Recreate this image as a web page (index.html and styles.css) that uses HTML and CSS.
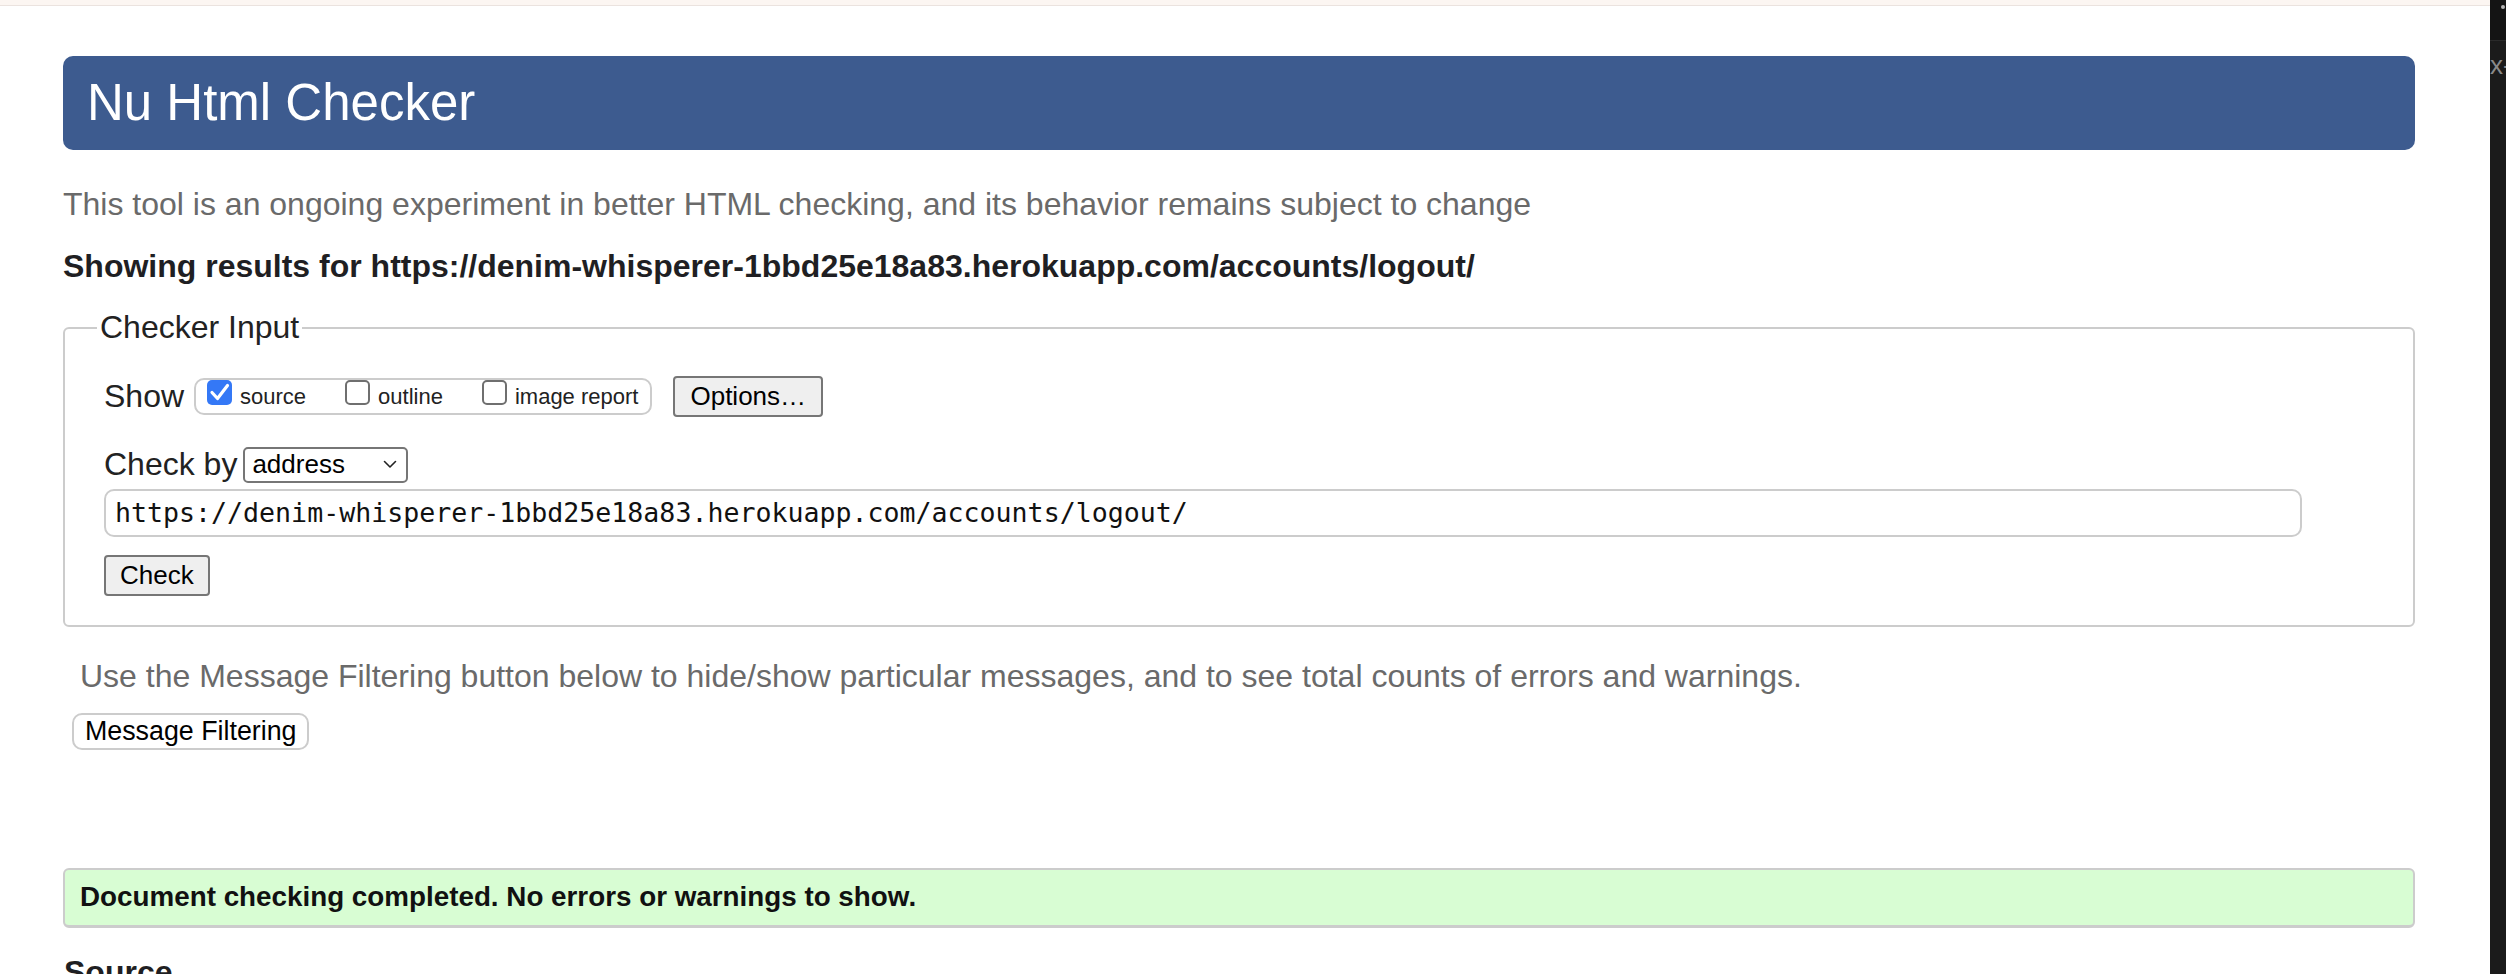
FILE: index.html
```html
<!DOCTYPE html>
<html lang="en">
<head>
<meta charset="utf-8">
<title>Showing results for https://denim-whisperer-1bbd25e18a83.herokuapp.com/accounts/logout/ - Nu Html Checker</title>
<link rel="stylesheet" href="styles.css">
</head>
<body>
<div class="frame">
  <div class="main">
    <div class="strip"></div>
    <div class="content">
      <h1 class="banner">Nu Html Checker</h1>
      <p class="intro">This tool is an ongoing experiment in better HTML checking, and its behavior remains subject to change</p>
      <p class="showing">Showing results for https://denim-whisperer-1bbd25e18a83.herokuapp.com/accounts/logout/</p>
      <fieldset class="checker">
        <legend>Checker Input</legend>
        <div class="row show-row">
          <span class="row-label">Show</span>
          <div class="opts">
            <label class="opt"><span class="cb cb-on"><svg width="25" height="25" viewBox="0 0 25 25"><path d="M5 12.5 L10.5 18.5 L20.5 5.5" fill="none" stroke="#fff" stroke-width="3.2" stroke-linecap="round" stroke-linejoin="round"/></svg></span>source</label>
            <label class="opt"><span class="cb cb-off"></span>outline</label>
            <label class="opt"><span class="cb cb-off"></span>image report</label>
          </div>
          <button class="btn options">Options…</button>
        </div>
        <div class="row by-row">
          <span class="row-label by-label">Check by</span>
          <div class="select"><span>address</span><svg width="14" height="9" viewBox="0 0 14 9"><path d="M1.5 1.5 L7 7 L12.5 1.5" fill="none" stroke="#222" stroke-width="1.6" stroke-linecap="round" stroke-linejoin="round"/></svg></div>
        </div>
        <div class="url">https://denim-whisperer-1bbd25e18a83.herokuapp.com/accounts/logout/</div>
        <button class="btn check">Check</button>
      </fieldset>
      <p class="note">Use the Message Filtering button below to hide/show particular messages, and to see total counts of errors and warnings.</p>
      <div class="filter-wrap"><button class="filter-btn">Message Filtering</button></div>
      <div class="success">Document checking completed. No errors or warnings to show.</div>
      <h2 class="source">Source</h2>
    </div>
  </div>
  <div class="side">
    <div class="side-top"><span class="dot"></span></div>
    <div class="side-label">x-</div>
  </div>
</div>
</body>
</html>
```
FILE: styles.css
```css
* { box-sizing: border-box; }
html, body { margin: 0; padding: 0; background: #fff; }
body { font-family: "Liberation Sans", Arial, sans-serif; color: #222; }

.frame { display: flex; width: 2506px; height: 974px; overflow: hidden; }
.main { flex: 1; min-width: 0; }
.strip { height: 6px; background: #fcf6f2; border-bottom: 1px solid #ebe3df; }
.content { padding: 50px 75px 0 63px; }

.banner {
  margin: 0;
  height: 94px;
  line-height: 94px;
  background: #3d5b8f;
  color: #fff;
  border-radius: 10px;
  padding-left: 24px;
  font-size: 51px;
  font-weight: normal;
}

.intro { margin: 36px 0 0; font-size: 32px; line-height: 37px; color: #6a6a6a; }
.showing { margin: 25px 0 0; font-size: 32px; line-height: 37px; font-weight: bold; color: #1f1f23; }

.checker {
  margin: 24px 0 0;
  border: 2px solid #ccc;
  border-radius: 6px;
  padding: 30px 111px 29px 39px;
  min-width: 0;
}
.checker legend { font-size: 32px; line-height: 37px; padding: 0 3px; margin-left: -7px; color: #222; }

.row { display: flex; align-items: center; }
.row-label { font-size: 32px; line-height: 37px; }
.show-row .row-label { margin-right: 10px; }
.opts {
  display: flex;
  align-items: center;
  height: 37px;
  border: 2px solid #ccc;
  border-radius: 10px;
  padding: 0 12px 0 11px;
}
.opt { display: flex; align-items: center; font-size: 22px; color: #222; }
.opt + .opt { margin-left: 39px; }
.cb { width: 25px; height: 25px; border-radius: 5px; margin: 0 8px 9px 0; display: block; }
.cb svg { display: block; }
.cb-on { background: #3478f6; }
.cb-off { border: 2px solid #6f6f6f; background: #fff; }

.btn {
  font-family: "Liberation Sans", Arial, sans-serif;
  font-size: 26px;
  color: #000;
  background: #efefef;
  border: 2px solid #767676;
  border-radius: 4px;
  height: 41px;
  line-height: 37px;
  padding: 0 15px;
}
.options { margin-left: 21px; }

.by-row { margin-top: 29px; }
.by-label { margin-right: 6px; }
.select {
  display: flex;
  align-items: center;
  justify-content: space-between;
  width: 165px;
  height: 36px;
  border: 2px solid #767676;
  border-radius: 5px;
  padding: 0 9px 0 7px;
  font-size: 26px;
  color: #000;
}
.select svg { display: block; }

.url {
  margin-top: 6px;
  height: 48px;
  border: 2px solid #ccc;
  border-radius: 10px;
  padding: 0 9px;
  font-family: "DejaVu Sans Mono", "Liberation Mono", monospace;
  font-size: 26.6px;
  line-height: 44px;
  color: #111;
  white-space: nowrap;
}

.check { display: block; margin-top: 18px; padding: 0 14px; }

.note { margin: 31px 0 0 17px; font-size: 32px; line-height: 37px; color: #6a6a6a; }
.filter-wrap { margin: 18px 0 0 9px; }
.filter-btn {
  font-family: "Liberation Sans", Arial, sans-serif;
  font-size: 26.8px;
  color: #000;
  height: 37px;
  line-height: 33px;
  background: #fff;
  border: 2px solid #ccc;
  border-radius: 10px;
  padding: 0 11px;
}

.success {
  margin-top: 118px;
  border: 2px solid #ccc;
  border-bottom-width: 3px;
  border-radius: 6px;
  background: #d8fdd3;
  padding: 11px 15px 12px;
  font-size: 27.8px;
  line-height: 32px;
  font-weight: bold;
  color: #111;
}

.source { margin: 26px 0 0 1px; font-size: 32px; line-height: 37px; font-weight: bold; color: #1f1f23; }

.side { width: 16px; background: #1b1b1b; overflow: hidden; }
.side-top {
  height: 41px;
  background: #141414;
  border-bottom: 1px solid #2a2a2a;
  display: flex;
  justify-content: flex-end;
  padding: 5px 1px 0 0;
}
.dot { width: 4px; height: 4px; border-radius: 50%; background: #b5b5b5; }
.side-label {
  margin-top: 9px;
  font-size: 26px;
  line-height: 30px;
  color: #8a8a8a;
  white-space: nowrap;
}
```
